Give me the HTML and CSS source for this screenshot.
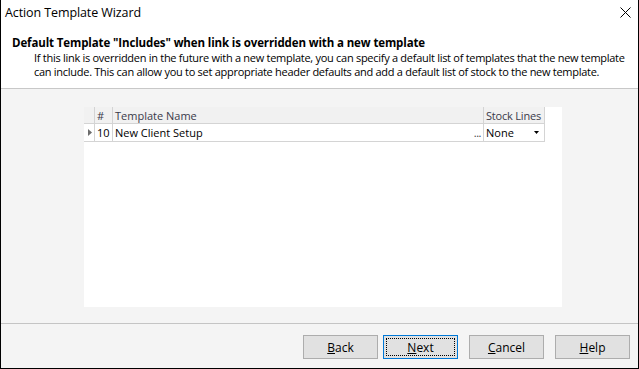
FILE: index.html
```html
<!DOCTYPE html>
<html lang="en">
<head>
    <meta charset="UTF-8">
    <title>Action Template Wizard</title>
    <link rel="stylesheet" href="styles.css">
</head>
<body>
    <div class="window">
        <div class="titlebar">
            <span class="title">Action Template Wizard</span>
            <span class="close">
                <svg width="11" height="11" viewBox="0 0 11 11"><path d="M0.5 0.5 L10.5 10.5 M10.5 0.5 L0.5 10.5" stroke="#000" stroke-width="1" fill="none"/></svg>
            </span>
        </div>

        <div class="header">
            <div class="heading">Default Template "Includes" when link is overridden with a new template</div>
            <div class="desc">If this link is overridden in the future with a new template, you can specify a default list of templates that the new template<br>can include. This can allow you to set appropriate header defaults and add a default list of stock to the new template.</div>
        </div>

        <div class="content">
            <div class="panel">
                <div class="grid">
                    <div class="cell head indicator"></div>
                    <div class="cell head num">#</div>
                    <div class="cell head name">Template Name</div>
                    <div class="cell head stock">Stock Lines</div>

                    <div class="cell indicator">
                        <svg width="4" height="7" viewBox="0 0 4 7"><path d="M0 0 L4 3.5 L0 7 Z" fill="#6d6d6d"/></svg>
                    </div>
                    <div class="cell num">10</div>
                    <div class="cell name">
                        <span>New Client Setup</span>
                        <span class="ellipsis">...</span>
                    </div>
                    <div class="cell stock">
                        <span>None</span>
                        <svg width="5" height="3" viewBox="0 0 5 3"><path d="M0 0 L5 0 L2.5 3 Z" fill="#000"/></svg>
                    </div>
                </div>
            </div>
        </div>

        <div class="footer">
            <button class="btn"><u>B</u>ack</button>
            <button class="btn default"><span class="focus"><u>N</u>ext</span></button>
            <button class="btn gap"><u>C</u>ancel</button>
            <button class="btn gap"><u>H</u>elp</button>
        </div>
    </div>
</body>
</html>
```

FILE: styles.css
```css
* {
    margin: 0;
    padding: 0;
    box-sizing: border-box;
}

body {
    font-family: "Open Sans", "Noto Sans", sans-serif;
    font-size: 12px;
    color: #000;
    background: #fff;
}

.window {
    width: 639px;
    height: 369px;
    border: 1px solid #000;
    border-top: none;
    display: flex;
    flex-direction: column;
    background: #fff;
}

.titlebar {
    flex-shrink: 0;
    height: 25px;
    display: flex;
    align-items: center;
    justify-content: space-between;
    padding: 0 7px 1px 4px;
}

.title {
    font-size: 12.5px;
    letter-spacing: -0.1px;
}

.close {
    display: flex;
    align-items: center;
}

.header {
    flex-shrink: 0;
    padding: 10px 10px 9px 11px;
    border-bottom: 1px solid #c8c8c8;
}

.heading {
    font-weight: 700;
    font-size: 11.5px;
    line-height: 16px;
    letter-spacing: -0.12px;
}

.desc {
    padding-left: 22px;
    font-size: 11px;
    line-height: 14px;
    letter-spacing: -0.28px;
    white-space: nowrap;
}

.content {
    flex: 1;
    background: #f4f4f4;
    padding: 18px 0 0 83px;
    border-bottom: 1px solid #c4c4c4;
}

.panel {
    width: 478px;
    height: 200px;
    background: #fff;
}

.grid {
    width: 461px;
    display: grid;
    grid-template-columns: 11px 18px 371px 61px;
    grid-template-rows: 17px 18px;
    font-size: 11px;
}

.cell {
    display: flex;
    align-items: center;
    border-right: 1px solid #d4d4d4;
    border-bottom: 1px solid #d4d4d4;
    padding-left: 2px;
    white-space: nowrap;
    overflow: hidden;
}

.cell.head {
    background: #f1f1f1;
    color: #3a3a4a;
}

.stock.head {
    letter-spacing: -0.2px;
}

.indicator {
    justify-content: center;
    padding-left: 1px;
}

.name {
    justify-content: space-between;
    padding-right: 2px;
}

.ellipsis {
    color: #444;
    letter-spacing: -0.5px;
}

.stock {
    justify-content: space-between;
    padding-right: 5px;
}

.footer {
    flex-shrink: 0;
    height: 44px;
    background: #f4f4f4;
    display: flex;
    justify-content: flex-end;
    align-items: flex-start;
    padding: 11px 8px 0 0;
}

.btn {
    width: 75px;
    height: 24px;
    margin-left: 5px;
    font-family: inherit;
    font-size: 12px;
    background: #e1e1e1;
    border: 1px solid #adadad;
    color: #000;
    display: flex;
    align-items: center;
    justify-content: center;
}

.btn.gap {
    margin-left: 11px;
}

.btn.default {
    border-color: #0078d7;
    padding: 2px;
}

.focus {
    width: 100%;
    height: 100%;
    border: 1px dotted #000;
    display: flex;
    align-items: center;
    justify-content: center;
}
```
